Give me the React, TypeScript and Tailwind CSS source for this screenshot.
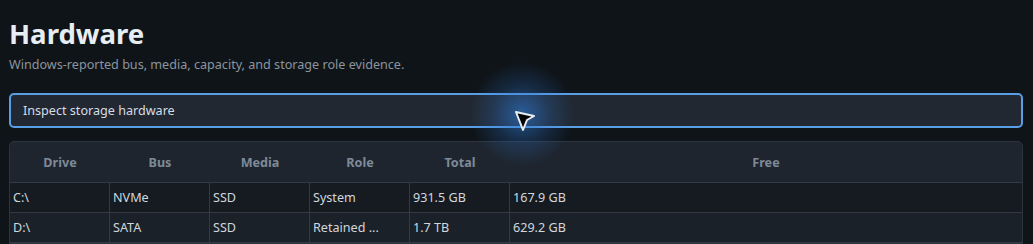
import React from "react";

const columns = ["Drive", "Bus", "Media", "Role", "Total", "Free"];

const rows = [
  ["C:\\", "NVMe", "SSD", "System", "931.5 GB", "167.9 GB"],
  ["D:\\", "SATA", "SSD", "Retained ...", "1.7 TB", "629.2 GB"],
];

function Cursor() {
  // pointer with a soft blue halo, sits over the search box
  return (
    <div className="pointer-events-none absolute left-[470px] top-[62px] h-[104px] w-[104px]">
      <div className="absolute inset-0 rounded-full bg-[radial-gradient(closest-side,rgba(46,120,210,0.65),rgba(46,120,210,0.22)_55%,rgba(46,120,210,0)_100%)]" />
      <svg className="absolute left-[43px] top-[47px]" width="26" height="26" viewBox="0 0 26 26">
        <polygon
          points="3,3 21,7 14,11 10,21"
          fill="#050608"
          stroke="#e8edf2"
          strokeWidth="2"
          strokeLinejoin="round"
        />
      </svg>
    </div>
  );
}

export default function App() {
  return (
    <div
      className="relative h-[244px] w-[1033px] overflow-hidden bg-[#0f1419] px-[9px] pt-[15px]"
      style={{ fontFamily: '"Noto Sans", "Open Sans", sans-serif' }}
    >
      <h1 className="text-[27.6px] font-bold leading-[36px] text-[#e6edf3]">Hardware</h1>
      <p className="mt-[5px] text-[12.6px] leading-[18px] text-[#8b949e]">
        Windows-reported bus, media, capacity, and storage role evidence.
      </p>

      <div className="mt-[19px] flex h-[35px] w-[1014px] items-center rounded-[5px] border-2 border-[#5a9ee6] bg-[#212832] px-[12px] pt-[2px] text-[12.6px] text-[#d6dde5]">
        Inspect storage hardware
      </div>

      <div className="mt-[13px] w-[1014px] overflow-hidden rounded-t-[5px] border border-[#2c343e] bg-[#1e252f]">
        <div className="grid h-[41px] grid-cols-[100px_100px_100px_100px_100px_1fr] items-center border-b border-[#323a45] pt-[3px] text-[12.6px] font-bold text-[#7f8a97]">
          {columns.map((c) => (
            <div key={c} className="text-center">
              {c}
            </div>
          ))}
        </div>
        {rows.map((r, i) => (
          <div
            key={i}
            className={
              i === 0
                ? "grid h-[30px] grid-cols-[100px_100px_100px_100px_100px_1fr] border-b border-[#323a45] bg-[#161b22] text-[12.6px] text-[#d0d7de]"
                : "grid h-[30px] grid-cols-[100px_100px_100px_100px_100px_1fr] border-b border-[#323a45] bg-[#1b2129] text-[12.6px] text-[#d0d7de]"
            }
          >
            {r.map((cell, j) => (
              <div
                key={j}
                className={
                  j < 5
                    ? "flex items-center border-r border-[#323a45] px-[3px] pt-[2px]"
                    : "flex items-center px-[3px] pt-[2px]"
                }
              >
                {cell}
              </div>
            ))}
          </div>
        ))}
      </div>

      <Cursor />
    </div>
  );
}
